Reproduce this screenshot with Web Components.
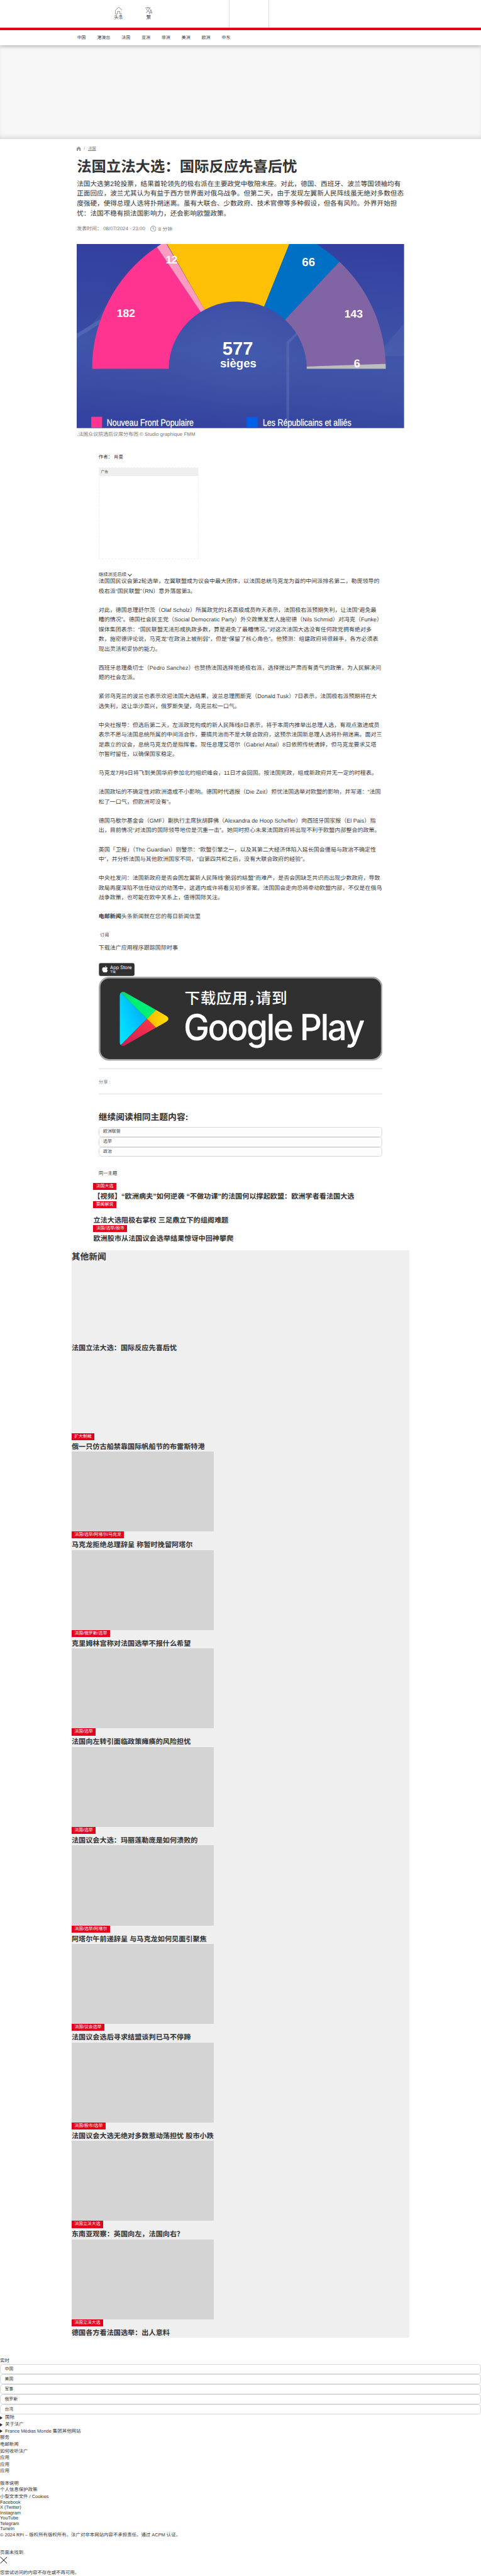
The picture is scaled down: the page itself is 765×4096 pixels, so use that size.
<!DOCTYPE html>
<html lang="zh-Hans">
<head>
<meta charset="utf-8">
<title>法国立法大选：国际反应先喜后忧</title>
<style>
html,body{margin:0;padding:0;background:#fff}
body{width:765px;height:4096px;overflow:hidden}
</style>
</head>
<body>
<page-canvas>
  <site-header></site-header>
  <ad-banner></ad-banner>
  <article-head></article-head>
  <seat-chart></seat-chart>
  <article-body></article-body>
  <store-badges></store-badges>
  <share-bar></share-bar>
  <topic-block></topic-block>
  <related-list>
    <news-item tag="法国大选">【视频】“欧洲病夫”如何逆袭 “不做功课"的法国何以撑起欧盟：欧洲学者看法国大选</news-item>
    <news-item tag="要闻解说" tall>立法大选阻极右掌权 三足鼎立下的组阁难题</news-item>
    <news-item tag="法国/选举/股市">欧洲股市从法国议会选举结果惊讶中回神攀爬</news-item>
  </related-list>
  <other-news>
    <news-item image="blank">法国立法大选：国际反应先喜后忧</news-item>
    <news-item image="blank" tag="扩大制裁">俄一只仿古船禁靠国际帆船节的布雷斯特港</news-item>
    <news-item image="grey" tag="法国/选举/阿塔尔/马克龙">马克龙拒绝总理辞呈 称暂时挽留阿塔尔</news-item>
    <news-item image="grey" tag="法国/俄罗斯/选举">克里姆林宫称对法国选举不报什么希望</news-item>
    <news-item image="grey" tag="法国/选举">法国向左转引面临政策瘫痪的风险担忧</news-item>
    <news-item image="grey" tag="法国/选举">法国议会大选：玛丽莲勒庞是如何溃败的</news-item>
    <news-item image="grey" tag="法国/选举/阿塔尔">阿塔尔午前递辞呈 与马克龙如何见面引聚焦</news-item>
    <news-item image="grey" tag="法国/议会选举">法国议会选后寻求结盟谈判已马不停蹄</news-item>
    <news-item image="grey" tag="法国/股市/选举">法国议会大选无绝对多数惹动荡担忧 股市小跌</news-item>
    <news-item image="grey" tag="法国立法大选">东南亚观察：英国向左，法国向右？</news-item>
    <news-item image="grey" tag="法国立法大选">德国各方看法国选举：出人意料</news-item>
  </other-news>
  <site-footer></site-footer>
</page-canvas>
<script>
const define = (name, html) => customElements.define(name, class extends HTMLElement {
  constructor() {
    super();
    const t = document.createElement('template');
    t.innerHTML = typeof html === 'function' ? html(this) : html;
    this.attachShadow({mode: 'open'}).appendChild(t.content.cloneNode(true));
  }
});

/* Design width is 1440px; the canvas is zoomed down to the window. */
define('page-canvas', `<style>
:host{display:block;width:1440px;height:7710px;zoom:.53125;overflow:hidden;background:#fff;color:#333;
font-family:"Liberation Sans","Noto Sans CJK SC",sans-serif;font-size:14px;line-height:20px;white-space:nowrap;text-rendering:geometricPrecision}
</style><slot></slot>`);

define('site-header', `<style>
:host{display:block;height:136px;background:#fff;position:relative;z-index:1;box-shadow:0 2px 12px rgba(0,0,0,.35)}
.top{height:82px;display:grid;grid-template-columns:685px 121px 1fr;border-bottom:8px solid #e4001b}
.left{display:flex;padding-left:336px;gap:52px}
.left div{display:flex;flex-direction:column;align-items:center;width:38px;padding-top:21px}
svg{display:block;width:22px;height:22px;fill:none;stroke:#444;stroke-width:1.1}
.mid{border:solid #dcdcdc;border-width:0 1px}
nav{display:flex;gap:34px;padding:15px 0 0 231px;font-size:13px}
</style>
<div class="top"><div class="left">
<div><svg viewBox="0 0 22 22"><path d="M.7 21V10.2L11 .8l10.3 9.4V21H14.5v-7.5h-7V21z"/></svg><span>头条</span></div>
<div><svg viewBox="0 0 22 22"><path d="M.5 3H16M8 0v3M3.5 5.5C5.5 11 8.500 14 12 15.500M13 3C11.500 9.500 8 14.500 2 17.500M12 21.500l4.700-13.500 4.800 13.500M13.600 17h6.300"/></svg><span>繁</span></div>
</div><div class="mid"></div><div></div></div>
<nav><span>中国</span><span>港澳台</span><span>法国</span><span>亚洲</span><span>非洲</span><span>美洲</span><span>欧洲</span><span>中东</span></nav>`);

define('ad-banner', `<style>:host{display:block;height:280px;background:#f7f7f7;box-shadow:inset 0 -10px 14px -5px rgba(0,0,0,.13)}</style>`);

define('article-head', `<style>
:host{display:block;box-sizing:border-box;height:314px;padding:21px 0 0 230px}
.crumb{display:flex;color:#777;font-size:12px}
.crumb svg{width:12px;height:13px;margin-top:2px;fill:#999}
.crumb i{font-style:normal;margin:0 9px}.crumb u{text-underline-offset:2px}
h1{margin:13px 0 0;font-size:44px;line-height:60px}
.lead{margin-top:7.5px;font-size:20px;line-height:30px}
.meta{display:flex;margin-top:18.5px;font-size:15px;color:#777}
.meta b{font-weight:400}
.meta svg{width:18px;height:18px;margin:-1px 6px 0 15px;fill:none;stroke:#777;stroke-width:1.6}
.meta em{font-style:normal;padding-top:2px;color:#808080}
</style>
<div class="crumb"><svg viewBox="0 0 12 13"><path d="M0 13V4.500L6 0l6 4.500V13H8V8.500H4V13z"/></svg><i>/</i><u>法国</u></div>
<h1>法国立法大选：国际反应先喜后忧</h1>
<div class="lead">法国大选第2轮投票，结果首轮领先的极右派在主要政党中敬陪末座。对此，德国、西班牙、波兰等国领袖均有<br>正面回应，波兰尤其认为有益于西方世界面对俄乌战争。但第二天，由于发现左翼新人民阵线虽无绝对多数但态<br>度强硬，使得总理人选将扑朔迷离。虽有大联合、少数政府、技术官僚等多种假设，但各有风险。外界开始担<br>忧：法国不稳有损法国影响力，还会影响欧盟政策。</div>
<div class="meta"><b>发表时间： 08/07/2024 - 23:00</b><svg viewBox="0 0 18 18"><circle cx="9" cy="9" r="8"/><path d="M9 4v5.500l3 1.800"/></svg><em>8 分钟</em></div>`);

define('seat-chart', `<style>
:host{display:block;padding-left:230px}
svg{display:block;width:980px;height:551px}
text{font-family:"Liberation Sans",sans-serif;font-weight:700;fill:#fff;text-anchor:middle}
text.k{font-weight:400;text-anchor:start;font-size:28px;stroke:#fff;stroke-width:.5}
.cap{margin-top:9.5px;font-size:15px;color:#777}
</style>
<svg viewBox="0 0 980 551">
<defs><linearGradient id="bg" x1=".6" y1="0" x2=".45" y2="1"><stop offset="0" stop-color="#3440a0"/><stop offset=".6" stop-color="#4056a9"/><stop offset=".78" stop-color="#3c4fa5"/><stop offset="1" stop-color="#34439f"/></linearGradient>
<radialGradient id="glow" cx="485" cy="290" r="230" gradientUnits="userSpaceOnUse"><stop offset="0" stop-color="#5069b4" stop-opacity=".25"/><stop offset="1" stop-color="#5069b4" stop-opacity="0"/></radialGradient>
<clipPath id="ring"><path clip-rule="evenodd" d="M46 373.500A439.700 439.700 0 0 1 925.400 373.500H688.800A206.600 201.600 0 0 0 275.500 373.500Z"/></clipPath></defs>
<rect width="980" height="551" fill="url(#bg)"/>
<path d="M0 0H230L46 240 0 270z" fill="#303c9b" opacity=".4"/>
<path d="M0 268L70 225V238L0 282z" fill="#6f80c4" opacity=".4"/>
<path d="M980 238L915 315 925 336H980z" fill="#6f80c4" opacity=".2"/>
<rect width="980" height="551" fill="url(#glow)"/>
<path d="M660 262L628 293V551H636V297L662 270z" fill="#6f80c4" opacity=".35"/>
<g clip-path="url(#ring)">
<path d="M0 551V-150H133L240.400 9.200 371.200 203.200 500 400 300 551z" fill="#ff3490"/>
<path d="M180-80L240.400 9.200 371.200 203.200 400 250 383.300 196.700 240-50z" fill="#ff9bbf"/>
<path d="M253.200-30L270.400 0 383.300 196.700 440 300H520L561.200 187.500 636.500 0 655-45 640-100H260z" fill="#ffc005"/>
<path d="M655-47L636.500 0 561.200 187.500 540 260 600 268 623.700 226.200 786.400 53.200 880-46z" fill="#0070c4"/>
<path d="M850-15L786.400 53.200 623.700 226.200 560 370.800 688.800 366.600 926 358.600H980V-20z" fill="#8164a4"/>
<path d="M680 366.900L926 358.600V380H680z" fill="#bdbdbd"/>
</g>
<text x="147.500" y="218.500" font-size="33">182</text>
<text x="283.500" y="58.200" font-size="33" letter-spacing="-1">12</text>
<text x="694" y="66.500" font-size="35">66</text>
<text x="828.800" y="219.500" font-size="33">143</text>
<text x="839" y="368.500" font-size="34">6</text>
<text x="482" y="332" font-size="55">577</text>
<text x="483.600" y="368" font-size="35">sièges</text>
<rect x="43.500" y="517" width="32.500" height="33" fill="#ff3490"/><rect x="508.500" y="518" width="33.500" height="32" fill="#0061e6"/>
<text class="k" x="90" y="543.500" textLength="260" lengthAdjust="spacingAndGlyphs">Nouveau Front Populaire</text>
<text class="k" x="557" y="544" textLength="265" lengthAdjust="spacingAndGlyphs">Les Républicains et alliés</text>
</svg>
<div class="cap">.法国众议院选后议席分布图 © Studio graphique FMM</div>`);

define('article-body', `<style>
:host{display:block;padding:48.5px 295px 0;color:#3c3c3c}
.by{color:#333}
.ad{box-sizing:border-box;width:300px;height:275px;margin-top:19px;border:1px dashed #f0f0f0}
.ad div{height:25px;line-height:27px;padding-left:5px;background:#efefef;font-size:11px;color:#555}
.more{display:flex;height:14px;line-height:14px;margin-top:40px;color:#333}
.more svg{width:13px;height:9px;margin:4px 0 0 4px;fill:none;stroke:#333;stroke-width:2}
p{margin:0 0 28px;font-size:17px;line-height:28.9px}
p.n{margin-bottom:0}
.sub{margin:30.400px 0 14px;padding-left:4.500px;font-size:13.333px;color:#333}
</style>
<div class="by">作者： 肖曼</div>
<div class="ad"><div>广告</div></div>
<div class="more">继续浏览后续<svg viewBox="0 0 13 9"><path d="M1 1l5.500 6.500L12 1"/></svg></div>
<p>法国国民议会第2轮选举，左翼联盟成为议会中最大团体，以法国总统马克龙为首的中间派排名第二，勒庞领导的<br>极右派“国民联盟”（RN）意外落居第3。</p>
<p>对此，德国总理舒尔茨（Olaf Scholz）所属政党的1名高级成员昨天表示，法国极右派预期失利，让法国“避免最<br>糟的情况”。德国社会民主党（Social Democratic Party）外交政策发言人施密德（Nils Schmid）对冯克（Funke）<br>媒体集团表示：“国民联盟无法形成执政多数，算是避免了最糟情况。”对这次法国大选没有任何政党拥有绝对多<br>数，施密德评论说，马克龙“在政治上被削弱”，但是“保留了核心角色”。他预测：组建政府将很棘手，各方必须表<br>现出灵活和妥协的能力。</p>
<p>西班牙总理桑切士（Pedro Sanchez）也赞扬法国选择拒绝极右派，选择提出严肃而有勇气的政策，为人民解决问<br>题的社会左派。</p>
<p>紧邻乌克兰的波兰也表示欢迎法国大选结果，波兰总理图斯克（Donald Tusk）7日表示，法国极右派预期将在大<br>选失利，这让华沙高兴，俄罗斯失望，乌克兰松一口气。</p>
<p>中央社报导：但选后第二天，左派政党构成的新人民阵线8日表示，将于本周内推举出总理人选，有观点激进成员<br>表示不愿与法国总统所属的中间派合作，要搞共治而不是大联合政府，这预示法国新总理人选将扑朔迷离。面对三<br>足鼎立的议会，总统马克龙仍是指挥者。现任总理艾塔尔（Gabriel Attal）8日依照传统请辞，但马克龙要求艾塔<br>尔暂时留任，以确保国家稳定。</p>
<p>马克龙7月9日将飞到美国华府参加北约组织峰会，11日才会回国。按法国宪政，组成新政府并无一定的时程表。</p>
<p>法国政坛的不确定性对欧洲造成不小影响。德国时代週报（Die Zeit）担忧法国选举对欧盟的影响，并写道：“法国<br>松了一口气，但欧洲可没有”。</p>
<p>德国马歇尔基金会（GMF）副执行主席狄胡薛佛（Alexandra de Hoop Scheffer）向西班牙国家报（El Pais）指<br>出，目前情况“对法国的国际领导地位是沉重一击”。她同时担心未来法国政府将出现不利于欧盟内部整合的政策。</p>
<p>英国「卫报」（The Guardian）则警示：“欧盟引擎之一，以及其第二大经济体陷入延长国会僵局与政治不确定性<br>中”，并分析法国与其他欧洲国家不同，“自第四共和之后，没有大联合政府的经验”。</p>
<p>中央社发问：法国新政府是否会因左翼新人民阵线“脆弱的结盟”而难产，是否会因缺乏共识而出现少数政府，导致<br>政局再度深陷不信任动议的动荡中，这週内或许将看见初步答案。法国国会走向恐将牵动欧盟内部，不仅是在俄乌<br>战争政策，也可能在欧中关系上，值得国际关注。</p>
<p class="n"><b>电邮新闻</b>头条新闻就在您的每日新闻信里</p>
<div class="sub">订阅</div>
<p class="n">下载法广应用程序跟踪国际时事</p>`);

define('store-badges', `<style>
:host{display:block;padding:29px 295px 0}
svg{display:block}
.a{width:108px;height:40px;margin-bottom:3px}.g{width:850px;height:251.500px}
text{fill:#fff}
.cn{font:500 46.500px "Noto Sans CJK SC",sans-serif;font-feature-settings:"halt";letter-spacing:.8px}
</style>
<svg class="a" viewBox="0 0 108 40"><rect x=".5" y=".5" width="107" height="39" rx="6" fill="#303030" stroke="#a6a6a6"/>
<path fill="#fff" d="M22.600 9c.2 1.800-1.500 4-3.600 4-.2-1.900 1.600-3.800 3.600-4zM26.500 16.200c-2.600 1.700-2.300 5.300.5 6.600-.8 2.400-2.500 5.900-4.300 6.100-1.300.1-1.800-.8-3.400-.8s-2.200.8-3.400.8c-2.500 0-5.700-5.600-5.700-9.400 0-4 2.500-6.200 5.200-6.200 1.600 0 2.800 1 3.800 1 .9 0 2.400-1.100 4.300-1 1.200 0 2.400.6 3 1.900z"/>
<text x="34" y="19.500" font-size="14.500" textLength="65" lengthAdjust="spacingAndGlyphs" font-family="Inter,sans-serif">App Store</text><text x="34" y="31" font-size="8.500" font-family="Noto Sans CJK SC,sans-serif">下载</text></svg>
<svg class="g" viewBox="0 0 850 251.500"><defs>
<linearGradient id="b" x1="1" y1="0" x2="0" y2=".7"><stop offset="0" stop-color="#00a0ff"/><stop offset="1" stop-color="#00e2ff"/></linearGradient>
<linearGradient id="y" x1="1" x2="0"><stop offset="0" stop-color="#ffe000"/><stop offset="1" stop-color="#ffb500"/></linearGradient>
<linearGradient id="r" x1="1" y1="0" x2="0" y2="1"><stop offset="0" stop-color="#ff3a44"/><stop offset="1" stop-color="#d01a5c"/></linearGradient>
<linearGradient id="n" x1="0" y1="0" x2="1" y2="1"><stop offset="0" stop-color="#1ac96d"/><stop offset=".35" stop-color="#00f076"/></linearGradient></defs>
<rect x="2.500" y="2.500" width="845" height="246.500" rx="29" fill="#303030" stroke="#a6a6a6" stroke-width="5"/>
<path fill="url(#b)" d="M66 48Q63 51 63 57V196Q63 201 66 204.500L144.200 126z"/>
<path fill="url(#n)" d="M66 48Q71 42.500 79 47L171.200 99.300 144.200 126z"/>
<path fill="url(#y)" d="M171.200 99.300L201 116.500Q208.500 121 208.500 126T201 135.500L171.200 152.700 144.200 126z"/>
<path fill="url(#r)" d="M66 204.500Q71 209.500 79 205L171.200 152.700 144.200 126z"/>
<text class="cn" x="257" y="80">下载应用，请到</text>
<text x="254" y="189.500" font-family="Inter,sans-serif" font-size="108" font-weight="500" letter-spacing="-5" textLength="538" lengthAdjust="spacingAndGlyphs">Google Play</text></svg>`);

define('share-bar', `<style>
:host{display:block;padding:23.500px 295px 0}
div{box-sizing:border-box;height:77px;border:solid #e2e2e2;border-width:1px 0;padding-top:29px;color:#808080}
</style><div>分享 :</div>`);

define('pill-box', `<style>
:host{display:block;box-sizing:border-box;height:30px;border:1px solid #d8d8d8;border-radius:8px;padding:5px 0 0 12px;font-size:13px;line-height:20px;color:#333}
</style><slot></slot>`);

define('topic-block', `<style>
:host{display:block;padding:54.500px 295px 0}
h2{margin:0 0 12px;font-size:26px;line-height:30px}
.s{margin-top:41px}
</style><h2>继续阅读相同主题内容:</h2>
<pill-box>欧洲联盟</pill-box><pill-box>选举</pill-box><pill-box>政治</pill-box><div class="s">同一主题</div>`);

define('related-list', `<style>:host{display:block;padding:17px 0 21px 279px}</style><slot></slot>`);

define('news-item', el => `<style>
:host{display:block}
.img{width:426px;height:239.600px}
.grey{background:#d4d4d4}
.tag{width:max-content;height:21px;line-height:21px;padding:0 8.500px;background:#e4001b;color:#fff;font-size:13px;margin-bottom:7.200px}
:host([tall]) .tag{margin-bottom:23.200px}
h3{margin:0;padding-left:.5px;font-size:21px;line-height:27px}
</style>${el.hasAttribute('image') ? `<div class="img ${el.getAttribute('image')}"></div>` : ''}${el.hasAttribute('tag') ? `<div class="tag">${el.getAttribute('tag')}</div>` : ''}<h3><slot></slot></h3>`);

define('other-news', `<style>
:host{display:block;margin:0 214px;background:#efefef}
h2{margin:0;font-size:26px;line-height:40px}
</style><h2>其他新闻</h2><slot></slot>`);

define('site-footer', `<style>
:host{display:block;padding-top:60px}
.h{height:19px}
.d{margin-top:1px}
.d span{display:flex;align-items:center;gap:7px}
.d svg{width:8px;height:10px;fill:#333}
.l{margin-top:16px}.e{line-height:16px;margin-top:-1.500px}
.c{margin-top:1.500px}.n{margin-top:32px}
.x{display:block;width:22px;height:22px;margin:1px 0 17px;fill:none;stroke:#000;stroke-width:1.800}
.z{line-height:18px}
</style>
<div class="h">实时</div>
<pill-box>中国</pill-box><pill-box>美国</pill-box><pill-box>军事</pill-box><pill-box>俄罗斯</pill-box><pill-box>台湾</pill-box>
<div class="d"><span><svg viewBox="0 0 8 10"><path d="M0 0l8 5-8 5z"/></svg>国际</span><span><svg viewBox="0 0 8 10"><path d="M0 0l8 5-8 5z"/></svg>关于法广</span><span><svg viewBox="0 0 8 10"><path d="M0 0l8 5-8 5z"/></svg>France Médias Monde 集团其他网站</span></div>
<div>服务<br>电邮新闻<br>如何收听法广<br>应用<br>应用<br>应用</div>
<div class="l">版本说明<br>个人信息保护政策<br>小型文本文件 / Cookies</div>
<div class="e">Facebook<br>X (Twitter)<br>Instagram<br>YouTube<br>Telegram<br>TuneIn</div>
<div class="c">© 2024 RFI – 版权所有版权所有。法广对非本网站内容不承担责任。通过 ACPM 认证。</div>
<div class="n">页面未找到</div>
<svg class="x" viewBox="0 0 22 22"><path d="M1 1.500l20 19M21 1.500L1 20.500"/></svg>
<div class="z">您尝试访问的内容不存在或不再可用。</div>`);
</script>
</body>
</html>
